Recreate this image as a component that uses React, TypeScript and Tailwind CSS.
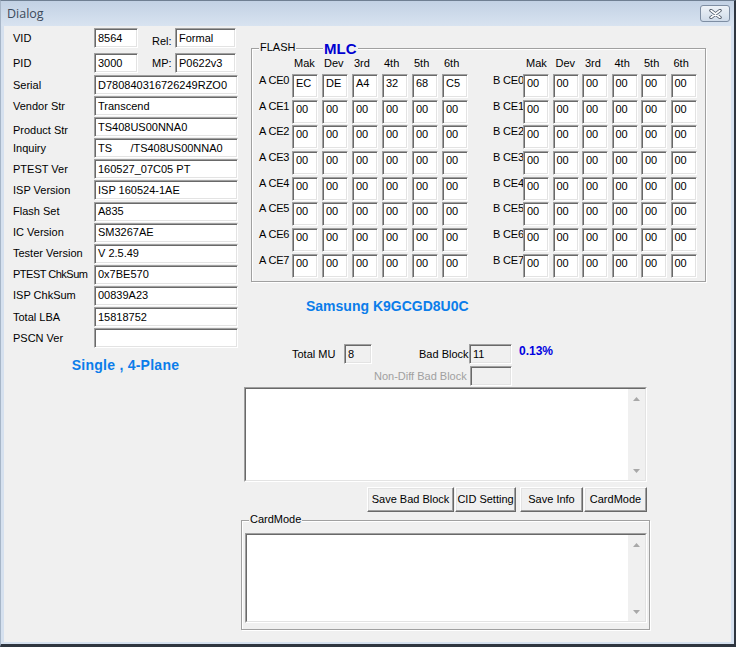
import React from "react";

const sunken =
  "border border-t-[#a0a0a0] border-l-[#a0a0a0] border-r-white border-b-white shadow-[inset_1px_1px_0_#696969,inset_-1px_-1px_0_#e3e3e3]";

const heads = ["Mak", "Dev", "3rd", "4th", "5th", "6th"];

const aRows = [
  ["EC", "DE", "A4", "32", "68", "C5"],
  ...Array.from({ length: 7 }, () => ["00", "00", "00", "00", "00", "00"]),
];
const bRows = Array.from({ length: 8 }, () => ["00", "00", "00", "00", "00", "00"]);

const info: [string, string][] = [
  ["Serial", "D780840316726249RZO0"],
  ["Vendor Str", "Transcend"],
  ["Product Str", "TS408US00NNA0"],
  ["Inquiry", "TS      /TS408US00NNA0"],
  ["PTEST Ver", "160527_07C05 PT"],
  ["ISP Version", "ISP 160524-1AE"],
  ["Flash Set", "A835"],
  ["IC Version", "SM3267AE"],
  ["Tester Version", "V 2.5.49"],
  ["PTEST ChkSum", "0x7BE570"],
  ["ISP ChkSum", "00839A23"],
  ["Total LBA", "15818752"],
  ["PSCN Ver", ""],
];

function Field({
  value = "",
  className = "",
  gray = false,
}: {
  value?: string;
  className?: string;
  gray?: boolean;
}) {
  return (
    <div
      className={`${sunken} ${gray ? "bg-[#f0f0f0]" : "bg-white"} flex h-[20px] items-center overflow-hidden whitespace-pre pl-[3px] ${className}`}
    >
      {value}
    </div>
  );
}

function Cell({ value }: { value: string }) {
  return (
    <div className={`${sunken} h-[24px] w-[26px] bg-white pl-[3px] pt-[2px]`}>
      {value}
    </div>
  );
}

function Bank({
  bank,
  rows,
  labelClass,
  gapClass,
  headClass,
}: {
  bank: string;
  rows: string[][];
  labelClass: string;
  gapClass: string;
  headClass: string;
}) {
  return (
    <div className="flex flex-col gap-[1.7px]">
      <div className="mb-[2.3px] flex h-[13px]">
        <div className={labelClass} />
        <div className={`flex ${gapClass}`}>
          {heads.map((h) => (
            <div key={h} className={`w-[26px] ${headClass}`}>
              {h}
            </div>
          ))}
        </div>
      </div>
      {rows.map((r, i) => (
        <div key={i} className="flex h-[24px]">
          <div className={`${labelClass} whitespace-nowrap tracking-[-0.2px]`}>
            {bank} CE{i}
          </div>
          <div className={`flex ${gapClass}`}>
            {r.map((v, j) => (
              <Cell key={j} value={v} />
            ))}
          </div>
        </div>
      ))}
    </div>
  );
}

function GroupBox({
  label,
  className = "",
  children,
}: {
  label: string;
  className?: string;
  children?: React.ReactNode;
}) {
  return (
    <div
      className={`relative border border-[#a0a0a0] shadow-[inset_1px_1px_0_#fff,1px_1px_0_#fff] ${className}`}
    >
      <span className="absolute -top-[8px] left-[7px] bg-[#f0f0f0] px-[1px]">{label}</span>
      {children}
    </div>
  );
}

function Arrow({ down = false }: { down?: boolean }) {
  return (
    <svg width="7" height="4" viewBox="0 0 7 4">
      <polygon points={down ? "0,0 7,0 3.5,4" : "0,4 3.5,0 7,4"} fill="#a8a8a8" />
    </svg>
  );
}

function MemoBox({ className = "" }: { className?: string }) {
  return (
    <div className={`border border-t-[#a0a0a0] border-l-[#a0a0a0] border-r-white border-b-white ${className}`}>
      <div className="flex h-full border border-t-[#696969] border-l-[#696969] border-r-[#e3e3e3] border-b-[#e3e3e3] bg-white">
        <div className="flex-1" />
        <div className="flex w-[17px] flex-col items-center justify-between bg-[#f0f0f0] pt-[8px] pb-[7px]">
          <Arrow />
          <Arrow down />
        </div>
      </div>
    </div>
  );
}

function Btn({ label, className = "" }: { label: string; className?: string }) {
  return (
    <button
      className={`flex h-[25px] items-center justify-center border border-t-white border-l-white border-r-[#696969] border-b-[#696969] bg-[#f0f0f0] shadow-[inset_-1px_-1px_0_#a0a0a0,inset_1px_1px_0_#e3e3e3] ${className}`}
    >
      {label}
    </button>
  );
}

export default function App() {
  return (
    <div className="flex h-[647px] w-[736px] flex-col overflow-hidden border-t border-r-2 border-b-[3px] border-l border-t-[#6f7f92] border-r-[#2f3640] border-b-[#2f3640] border-l-[#a7b6c8] bg-[#d6e1ef] font-['Liberation_Sans',Arial,sans-serif] text-[11px] leading-[13px] text-black">
      {/* title bar */}
      <div className="flex h-[25px] items-start justify-between bg-linear-to-b from-[#c2d1e4] to-[#d8e3f0] pr-[4px] pl-[6px]">
        <span className="mt-[5px] font-['Open_Sans',sans-serif] text-[12.5px] leading-[16px] text-[#3d4a5b]">
          Dialog
        </span>
        <div className="mt-[4px] flex h-[17px] w-[30px] items-center justify-center rounded-[3px] border border-[#7e8ea3] bg-linear-to-b from-[#eef3f8] to-[#cfdbe9]">
          <svg width="13" height="10" viewBox="0 0 13 10">
            <path d="M2 1.5 L11 8.5 M11 1.5 L2 8.5" stroke="#4d5866" strokeWidth="3.4" strokeLinecap="round" />
            <path d="M2 1.5 L11 8.5 M11 1.5 L2 8.5" stroke="#ffffff" strokeWidth="1.6" strokeLinecap="round" />
          </svg>
        </div>
      </div>

      {/* client area */}
      <div className="mr-[3px] mb-[2px] ml-[3px] flex flex-1 bg-[#f0f0f0]">
        {/* left column */}
        <div className="mt-[2px] ml-[9px] flex w-[225px] flex-col">
          <div className="flex h-[20px] items-center">
            <span className="w-[81px]">VID</span>
            <Field value="8564" className="w-[44px]" />
            <span className="ml-[14px] w-[23px] pt-[6px]">Rel:</span>
            <Field value="Formal" className="w-[61px]" />
          </div>
          <div className="mt-[5px] flex h-[20px] items-center">
            <span className="w-[81px]">PID</span>
            <Field value="3000" className="w-[44px]" />
            <span className="ml-[14px] w-[23px] pt-[1px]">MP:</span>
            <Field value="P0622v3" className="w-[61px]" />
          </div>
          <div className="mt-[2px] flex flex-col gap-[1.1px]">
            {info.map(([k, v]) => (
              <div key={k} className="flex h-[20px] items-center">
                <span
                  className={`w-[81px] whitespace-nowrap ${k === "Product Str" ? "pt-[7px]" : ""} ${k === "PTEST ChkSum" ? "tracking-[-0.5px]" : ""}`}
                >
                  {k}
                </span>
                <Field value={v} className="flex-1" />
              </div>
            ))}
          </div>
          <div className="mt-[9px] text-center text-[14px] leading-[16px] font-bold tracking-[0.25px] text-[#0b7dea]">
            Single , 4-Plane
          </div>
        </div>

        {/* right column */}
        <div className="ml-[3px] flex w-[490px] flex-col">
          <GroupBox label="FLASH" className="mt-[22px] ml-[10px] h-[234px] w-[455px]">
            <span className="absolute -top-[8px] left-[71px] bg-[#f0f0f0] px-[1px] text-[15px] leading-[16px] font-bold text-[#0000d0]">
              MLC
            </span>
            <div className="flex pt-[8px] pl-[7px]">
              <Bank bank="A" rows={aRows} labelClass="w-[33px]" gapClass="gap-[4px]" headClass="pl-[2px]" />
              <div className="ml-[25px]">
                <Bank bank="B" rows={bRows} labelClass="w-[30px]" gapClass="gap-[3.5px]" headClass="pl-[3px]" />
              </div>
            </div>
          </GroupBox>

          <div className="mt-[16px] ml-[65px] text-[14px] leading-[16px] font-bold text-[#0b7dea]">
            Samsung K9GCGD8U0C
          </div>

          <div className="mt-[30px] flex h-[20px] items-center">
            <span className="ml-[51px] w-[52px]">Total MU</span>
            <Field value="8" gray className="w-[28px]" />
            <span className="ml-[47px] w-[50px]">Bad Block</span>
            <Field value="11" gray className="w-[43px]" />
            <span className="mb-[6px] ml-[7px] text-[12px] leading-[14px] font-bold text-[#0000e0]">0.13%</span>
          </div>
          <div className="mt-[2px] ml-[133px] flex h-[20px] items-center">
            <span className="w-[96px] pr-[4px] text-right whitespace-nowrap text-[#a0a0a0]">Non-Diff Bad Block</span>
            <Field gray className="w-[42px]" />
          </div>

          <MemoBox className="mt-[1px] ml-[3px] h-[95px] w-[403px]" />

          <div className="mt-[5px] ml-[126px] flex">
            <Btn label="Save Bad Block" className="w-[87px]" />
            <Btn label="CID Setting" className="ml-[1px] w-[61px]" />
            <Btn label="Save Info" className="ml-[4px] w-[63px]" />
            <Btn label="CardMode" className="ml-[1px] w-[63px]" />
          </div>

          <GroupBox label="CardMode" className="mt-[8px] h-[110px] w-[409px]">
            <MemoBox className="mt-[12px] ml-[3px] h-[90px] w-[402px]" />
          </GroupBox>
        </div>
      </div>
    </div>
  );
}
